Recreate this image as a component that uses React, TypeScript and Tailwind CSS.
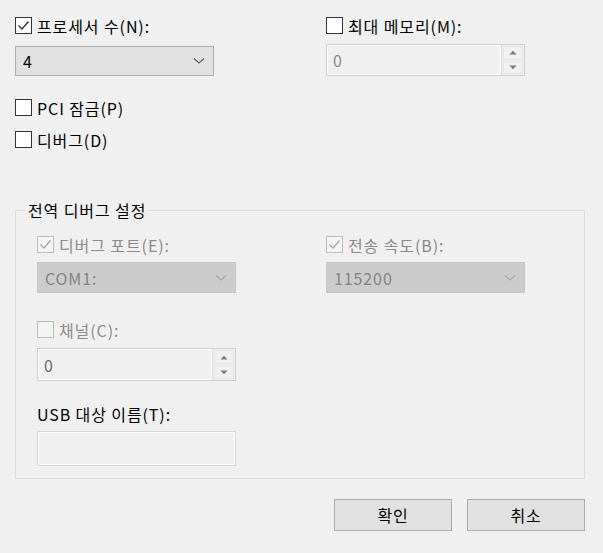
import React from "react";

const FONT = { fontFamily: '"Malgun Gothic", "Noto Sans CJK KR", "Noto Sans", sans-serif' };
const TXT = "text-[16px] leading-none tracking-[0.9px]";

function Check({ checked, disabled }: { checked?: boolean; disabled?: boolean }) {
  return (
    <div
      className={
        "w-[17px] h-[17px] shrink-0 border flex items-center justify-center " +
        (disabled ? "border-[#bcbcbc] bg-[#f4f4f4]" : "border-[#333333] bg-white")
      }
    >
      {checked && (
        <svg width="15" height="15" viewBox="0 0 15 15">
          <path
            d="M2.5 7.5 L6 11 L12.5 3.5"
            fill="none"
            stroke={disabled ? "#a8a8a8" : "#333333"}
            strokeWidth="1.4"
          />
        </svg>
      )}
    </div>
  );
}

function CheckRow({ label, checked, disabled }: { label: string; checked?: boolean; disabled?: boolean }) {
  return (
    <div className="flex items-center gap-[5px] h-[17px]">
      <Check checked={checked} disabled={disabled} />
      <span className={TXT + " whitespace-nowrap " + (disabled ? "text-[#8a8a8a]" : "text-black")}>
        {label}
      </span>
    </div>
  );
}

function Chevron({ color }: { color: string }) {
  return (
    <svg width="12" height="8" viewBox="0 0 12 8">
      <path d="M1 1.5 L6 6 L11 1.5" fill="none" stroke={color} strokeWidth="1.2" />
    </svg>
  );
}

function Combo({ value, disabled, h }: { value: string; disabled?: boolean; h: string }) {
  return (
    <div
      className={
        "w-[199px] border flex items-center justify-between pl-[7px] pr-[8px] " +
        h +
        (disabled ? " bg-[#cccccc] border-[#c4c4c4] text-[#838383]" : " bg-[#e1e1e1] border-[#adadad] text-black")
      }
    >
      <span className={TXT}>{value}</span>
      <Chevron color={disabled ? "#a6a6a6" : "#5a5a5a"} />
    </div>
  );
}

function Spin({ value, h, textColor }: { value: string; h: string; textColor: string }) {
  return (
    <div className={"w-[199px] border border-[#cfcfcf] bg-[#f0f0f0] flex " + h}>
      <div className="flex-1 border border-white flex items-center pl-[5px]">
        <span className={TXT + " " + textColor}>{value}</span>
      </div>
      <div className="w-[23px] flex flex-col border-l border-[#d9d9d9] bg-[#f0f0f0] p-[1px] gap-[1px]">
        <div className="flex-1 border border-[#e4e4e4] flex items-center justify-center">
          <svg width="8" height="5" viewBox="0 0 8 5">
            <path d="M0.5 4.5 L4 0.8 L7.5 4.5 Z" fill="#7a7a7a" />
          </svg>
        </div>
        <div className="flex-1 border border-[#e4e4e4] flex items-center justify-center">
          <svg width="8" height="5" viewBox="0 0 8 5">
            <path d="M0.5 0.5 L4 4.2 L7.5 0.5 Z" fill="#7a7a7a" />
          </svg>
        </div>
      </div>
    </div>
  );
}

function Button({ label }: { label: string }) {
  return (
    <div className="w-[118px] h-[32px] bg-[#e1e1e1] border border-[#adadad] flex items-center justify-center">
      <span className={TXT + " text-black"}>{label}</span>
    </div>
  );
}

export default function App() {
  return (
    <div className="w-[603px] h-[553px] bg-[#f0f0f0] pt-[17px] pl-[15px] overflow-hidden" style={FONT}>
      <div className="grid grid-cols-[311px_1fr]">
        <div className="flex flex-col">
          <CheckRow label="프로세서 수(N):" checked />
          <div className="mt-[12px]">
            <Combo value="4" h="h-[30px]" />
          </div>
        </div>
        <div className="flex flex-col">
          <CheckRow label="최대 메모리(M):" />
          <div className="mt-[10px]">
            <Spin value="0" h="h-[32px]" textColor="text-[#8a8a8a]" />
          </div>
        </div>
      </div>

      <div className="mt-[23px]">
        <CheckRow label="PCI 잠금(P)" />
      </div>
      <div className="mt-[15px]">
        <CheckRow label="디버그(D)" />
      </div>

      <div className="relative mt-[62px] w-[570px] border border-[#dcdcdc] pt-[25px] pl-[21px] pb-[12px]">
        <div className="absolute left-[10px] top-[-11px] px-[2px] bg-[#f0f0f0] h-[20px] flex items-center">
          <span className={TXT + " text-black"}>전역 디버그 설정</span>
        </div>
        <div className="grid grid-cols-[289px_1fr]">
          <div className="flex flex-col">
            <CheckRow label="디버그 포트(E):" checked disabled />
            <div className="mt-[9px]">
              <Combo value="COM1:" disabled h="h-[31px]" />
            </div>
          </div>
          <div className="flex flex-col">
            <CheckRow label="전송 속도(B):" checked disabled />
            <div className="mt-[9px]">
              <Combo value="115200" disabled h="h-[31px]" />
            </div>
          </div>
        </div>
        <div className="mt-[28px]">
          <CheckRow label="채널(C):" disabled />
        </div>
        <div className="mt-[10px]">
          <Spin value="0" h="h-[33px]" textColor="text-[#6d6d6d]" />
        </div>
        <div className="mt-[23px] h-[20px] flex items-center">
          <span className={TXT + " text-black"}>USB 대상 이름(T):</span>
        </div>
        <div className="mt-[7px] w-[199px] h-[35px] border border-[#d4d4d4] bg-[#f0f0f0]">
          <div className="w-full h-full border border-white" />
        </div>
      </div>

      <div className="mt-[20px] w-[570px] flex justify-end gap-[15px]">
        <Button label="확인" />
        <Button label="취소" />
      </div>
    </div>
  );
}
